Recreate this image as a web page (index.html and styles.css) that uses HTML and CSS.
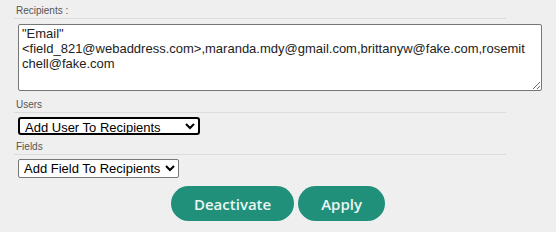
FILE: index.html
```html
<!DOCTYPE html>
<html lang="en">
<head>
  <meta charset="UTF-8" />
  <title>Recipients</title>
  <link rel="stylesheet" href="styles.css">
</head>
<body>
  <div class="panel">
    <div class="field-label">Recipients :</div>
    <textarea class="recipients">"Email" &lt;field_821@webaddress.com&gt;,maranda.mdy@gmail.com,brittanyw@fake.com,rosemitchell@fake.com</textarea>

    <div class="field-label">Users</div>
    <select class="picker picker-focus">
      <option>Add User To Recipients</option>
    </select>

    <div class="field-label">Fields</div>
    <select class="picker">
      <option>Add Field To Recipients</option>
    </select>

    <div class="actions">
      <button class="btn">Deactivate</button>
      <button class="btn">Apply</button>
    </div>
  </div>
</body>
</html>
```

FILE: styles.css
```css
body {
  margin: 0;
  background-color: #efefef;
  font-family: Arial, "Liberation Sans", sans-serif;
}
.panel {
  padding: 5px 0 0 14px;
}
.field-label {
  width: 490px;
  font-size: 10px;
  color: #555;
  padding: 0 0 1px 2px;
  border-bottom: 1px solid #dcdcdc;
  line-height: 12px;
}
.recipients {
  display: block;
  box-sizing: border-box;
  width: 524px;
  height: 67px;
  margin: 5px 0 8px 4px;
  padding: 1px 12px 1px 3px;
  border: 1px solid #767676;
  border-radius: 2px;
  background: #fff;
  font-family: Arial, "Liberation Sans", sans-serif;
  font-size: 13px;
  line-height: 15px;
  color: #222;
  resize: both;
}
.picker {
  display: block;
  box-sizing: border-box;
  height: 19px;
  margin: 4px 0 4px 4px;
  padding: 0 1px;
  border: 1px solid #767676;
  border-radius: 2px;
  background: #fff;
  font-family: Arial, "Liberation Sans", sans-serif;
  font-size: 13px;
  color: #000;
}
.picker-focus {
  width: 182px;
  height: 18px;
  margin-top: 4px;
  margin-bottom: 6px;
  border: 2px solid #000;
  border-radius: 3px;
}
.actions {
  display: flex;
  justify-content: center;
  gap: 4px;
  margin-top: 8px;
  padding-right: 14px;
}
.btn {
  height: 35px;
  padding: 0 23px;
  border: none;
  border-radius: 18px;
  background-color: #21907b;
  color: #eaf6f2;
  font-family: "Open Sans", sans-serif;
  font-weight: 600;
  font-size: 15px;
}
```
